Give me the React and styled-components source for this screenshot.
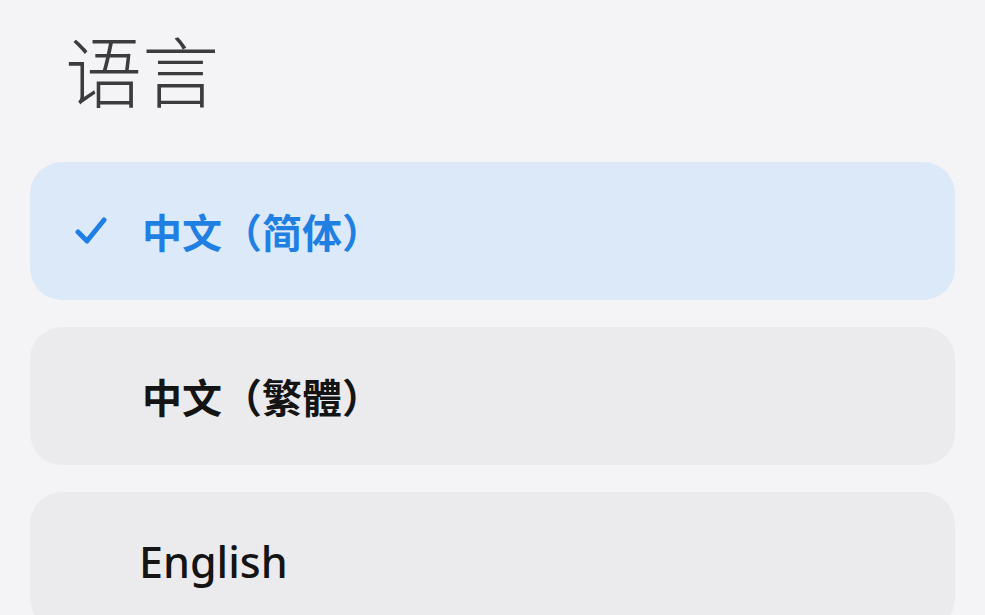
import React from "react";
import styled, { createGlobalStyle } from "styled-components";

const GlobalStyle = createGlobalStyle`
  html, body {
    margin: 0;
    padding: 0;
    background: #f4f4f6;
    overflow: hidden;
  }
  body {
    font-family: "Noto Sans", "Noto Sans CJK SC", sans-serif;
  }
`;

const languages = [
  { label: "中文（简体）", selected: true },
  { label: "中文（繁體）" },
  { label: "English", latin: true },
];

const App = () => {
  return (
    <Page>
      <GlobalStyle />
      <Title>语言</Title>
      <List>
        {languages.map((el, i) => (
          <Option key={i} $selected={el.selected}>
            <CheckSlot>
              {el.selected && (
                <svg width="32" height="30" viewBox="0 0 32 30">
                  <polyline
                    points="3,16 12,25 29,4"
                    fill="none"
                    stroke="#1f7fe3"
                    strokeWidth="5"
                    strokeLinecap="round"
                    strokeLinejoin="round"
                  />
                </svg>
              )}
            </CheckSlot>
            <Label $selected={el.selected} $latin={el.latin}>
              {el.label}
            </Label>
          </Option>
        ))}
      </List>
    </Page>
  );
};

const Page = styled.div`
  height: 615px;
  padding: 0 30px;
  box-sizing: border-box;
`;

const Title = styled.h1`
  margin: 0;
  padding: 31px 0 0 35px;
  height: 76px;
  font-family: "Noto Sans CJK SC", sans-serif;
  font-size: 77px;
  line-height: 76px;
  font-weight: 300;
  color: #3c3c3e;
`;

const List = styled.div`
  margin-top: 55px;
  display: flex;
  flex-direction: column;
  gap: 27px;
`;

const Option = styled.div`
  height: 138px;
  flex-shrink: 0;
  border-radius: 32px;
  background: ${(p) => (p.$selected ? "#dce9f8" : "#ebebed")};
  display: flex;
  align-items: center;
  padding-left: 45px;
`;

const CheckSlot = styled.div`
  width: 67px;
  display: flex;
  align-items: center;
`;

const Label = styled.span`
  font-family: ${(p) =>
    p.$latin
      ? `"Noto Sans", "Open Sans", sans-serif`
      : `"Noto Sans CJK SC", "Noto Sans CJK TC", sans-serif`};
  font-size: ${(p) => (p.$latin ? "43px" : "40px")};
  font-weight: ${(p) => (p.$latin ? 500 : 600)};
  color: ${(p) => (p.$selected ? "#1f7fe3" : "#141414")};
  line-height: 1;
  margin-left: ${(p) => (p.$latin ? "-3px" : "0")};
`;

export default App;
